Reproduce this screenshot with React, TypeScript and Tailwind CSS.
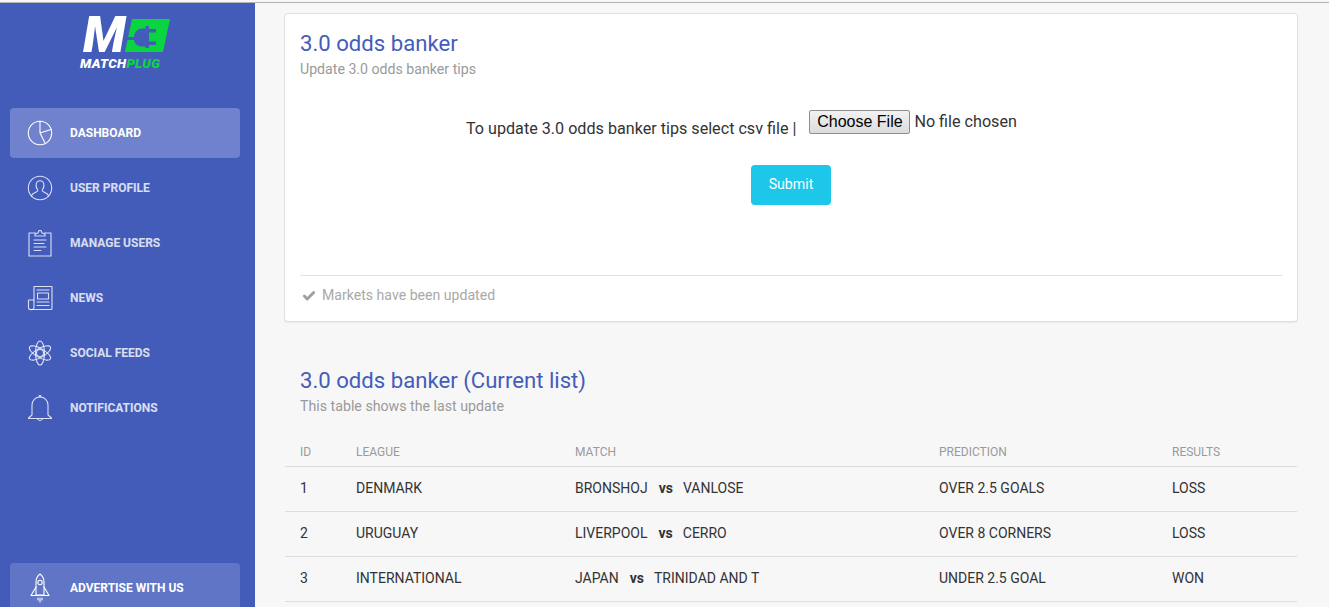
import React from "react";
import { Check } from "lucide-react";

const s = { fill: "none", stroke: "currentColor", strokeWidth: 1, strokeLinecap: "round" as const, strokeLinejoin: "round" as const };

const Pie = () => (
  <svg width="26" height="26" viewBox="0 0 26 26" {...s} strokeWidth={1.1}>
    <circle cx="13" cy="13" r="11.7" />
    <path d="M13 1.3V13l11-3.6M13 13l4.8 9.6" />
  </svg>
);
const UserIcon = () => (
  <svg width="26" height="26" viewBox="0 0 26 26" {...s} strokeWidth={1.1}>
    <circle cx="13" cy="13" r="11.7" />
    <path d="M4.5 21c.3-3 5.3-3.4 6.2-5.2.3-.7-.1-1.3-.6-2-1.7-2.200-1.600-8 2.900-8s4.600 5.800 2.900 8c-.5.700-.9 1.300-.6 2 .9 1.800 5.900 2.200 6.200 5.200" />
  </svg>
);
const Clip = () => (
  <svg width="26" height="28" viewBox="0 0 26 28" {...s} strokeWidth={1.1}>
    <path d="M8.500 4H2v23h22V4h-6.500" />
    <path d="M8 7V5l3-1 1-2.500h2L15 4l3 1v2z" />
    <path d="M7 11h12M7 14.500h10M7 18h12M7 21.500h7" />
  </svg>
);
const News = () => (
  <svg width="26" height="26" viewBox="0 0 26 26" {...s} strokeWidth={1.1}>
    <path d="M7 15V1.500h18v22a1 1 0 0 1-1 1H4" />
    <path d="M7 15H1.500v7.500a2 2 0 0 0 2 2 2.500 2.500 0 0 0 3.500-2V15z" />
    <path d="M10 5h12M10.500 8h11v6h-11zM10 17h12M10 20.500h12" />
  </svg>
);
const Atom = () => (
  <svg width="26" height="26" viewBox="0 0 26 26" {...s} strokeWidth={1.1}>
    <circle cx="13" cy="13" r="3.500" />
    <ellipse cx="13" cy="13" rx="4.500" ry="12" />
    <ellipse cx="13" cy="13" rx="4.500" ry="12" transform="rotate(60 13 13)" />
    <ellipse cx="13" cy="13" rx="4.500" ry="12" transform="rotate(120 13 13)" />
  </svg>
);
const Bell = () => (
  <svg width="26" height="28" viewBox="0 0 26 28" {...s} strokeWidth={1.1}>
    <path d="M5 21V11c0-4.500 3.500-8 8-8s8 3.500 8 8v10l3.500 3v.5h-23V24z" />
    <path d="M12 3l.500-1.500h1L14 3M10.500 24.500c.3 1.500 1 2 2.500 2s2.200-.5 2.500-2" />
  </svg>
);
const Rocket = () => (
  <svg width="20" height="30" viewBox="0 0 20 30" {...s} strokeWidth={1.1}>
    <path d="M6 22V9c0-3.500 2-6.500 4-8 2 1.500 4 4.500 4 8v13z" />
    <circle cx="10" cy="9.500" r="2.200" />
    <path d="M6 14l-5 8.500h18L14 14M8 25v2M10 25v4M12 25v2" />
  </svg>
);

const Logo = () => (
  <div className="flex flex-col items-start pl-[80px]">
    <div className="ml-[3px] flex h-[34px] items-center">
      <span className="mr-[-1px] text-[50px] font-black italic leading-[34px] text-white">M</span>
      <svg width="45" height="33" viewBox="0 0 45 33" className="block">
        <path d="M7 0H45L38 33H0Z" fill="#0bd441" />
        <path
          d="M1.500 18H9C9.500 13 12.500 9.500 17 9.500H20.500V7H24V10H31V13.500H24V22.500H31V26H24V29H20.500V27.500H17C12.500 27.500 9.500 25 9 21H0.800Z"
          fill="#435cba"
        />
      </svg>
    </div>
    <div className="mt-[5px] flex text-[13.3px] font-black italic leading-[14px] tracking-[0.3px]">
      <span className="text-white">MATCH</span>
      <span className="text-[#0bd441]">PLUG</span>
    </div>
  </div>
);

const navItems = [
  { label: "Dashboard", icon: <Pie />, active: true },
  { label: "User Profile", icon: <UserIcon /> },
  { label: "Manage Users", icon: <Clip /> },
  { label: "News", icon: <News /> },
  { label: "Social Feeds", icon: <Atom /> },
  { label: "Notifications", icon: <Bell /> },
];

const rows = [
  { id: 1, league: "DENMARK", home: "BRONSHOJ", away: "VANLOSE", prediction: "OVER 2.5 GOALS", result: "LOSS" },
  { id: 2, league: "URUGUAY", home: "LIVERPOOL", away: "CERRO", prediction: "OVER 8 CORNERS", result: "LOSS" },
  { id: 3, league: "INTERNATIONAL", home: "JAPAN", away: "TRINIDAD AND T", prediction: "UNDER 2.5 GOAL", result: "WON" },
];

const cols = "grid grid-cols-[56px_219px_364px_233px_1fr] px-[15px]";

export default function App() {
  return (
    <div className="h-[607px] overflow-hidden bg-[#f7f7f8] font-['Roboto',sans-serif]">
      <div className="mt-[2px] h-px bg-[#b4b4b4]" />
      <div className="flex h-[604px]">
        <aside className="flex h-[604px] w-[255px] shrink-0 flex-col overflow-hidden bg-[#435cba]">
          <div className="h-[105px] shrink-0 pt-[15px]">
            <Logo />
          </div>
          <nav className="flex flex-col gap-[5px]">
            {navItems.map((n) => (
              <div
                key={n.label}
                className={`ml-[10px] mr-[15px] flex h-[50px] items-center rounded-[4px] text-[12px] font-bold uppercase ${
                  n.active ? "bg-[#7082cd] text-white" : "text-white/80"
                }`}
              >
                <span className="flex w-[60px] justify-center">{n.icon}</span>
                <span>{n.label}</span>
              </div>
            ))}
          </nav>
          <div className="mb-[-6px] ml-[10px] mr-[15px] mt-auto flex h-[50px] shrink-0 items-center rounded-[4px] bg-[#6075c6] text-[12px] font-bold uppercase text-white">
            <span className="flex w-[60px] justify-center"><Rocket /></span>
            <span>Advertise with us</span>
          </div>
        </aside>

        <main className="min-w-0 flex-1 pl-[29px] pr-[31px] pt-[10px]">
          <section className="h-[309px] rounded-[4px] border border-[#e0e0e0] bg-white px-[15px] pt-[14px] shadow-[0_1px_1px_rgba(0,0,0,0.06)]">
            <h4 className="text-[22.15px] font-normal leading-[30px] text-[#435cba]">3.0 odds banker</h4>
            <p className="mt-px text-[14.15px] leading-[20px] text-[#9a9a9a]">Update 3.0 odds banker tips</p>
            <div className="mt-[31px] flex items-start pl-[166px] text-[16.15px] text-[#333333]">
              <span className="mt-[9px] leading-[20px]">To update 3.0 odds banker tips select csv file |</span>
              <button className="ml-[13px] h-[24px] w-[101px] rounded-[2px] border border-[#8e8e8e] bg-linear-to-b from-[#f2f2f2] to-[#dcdcdc] font-['Liberation_Sans',sans-serif] text-[16px] leading-[20px] text-black">
                Choose File
              </button>
              <span className="ml-[4px] leading-[23px]">No file chosen</span>
            </div>
            <div className="mt-[26px] flex justify-center">
              <button className="h-[40px] w-[80px] rounded-[4px] bg-[#1dc7ea] text-[14.2px] font-normal text-white">Submit</button>
            </div>
            <div className="mt-[70px] flex h-[41px] items-center border-t border-[#e3e3e3] pl-[2px] text-[14.1px] text-[#a9a9a9]">
              <Check size={14} strokeWidth={5} className="mr-[6px] text-[#a0a0a0]" />
              <span>Markets have been updated</span>
            </div>
          </section>

          <section className="mx-px mt-[43px]">
            <h4 className="pl-[15px] text-[22.15px] font-normal leading-[30px] text-[#435cba]">3.0 odds banker (Current list)</h4>
            <p className="mt-px pl-[15px] text-[14.2px] leading-[20px] text-[#9a9a9a]">This table shows the last update</p>
            <div className={`${cols} mt-[16px] h-[35px] items-center border-b border-[#dddddd] pt-[5px] text-[12px] uppercase text-[#9a9a9a]`}>
              <span>ID</span>
              <span>League</span>
              <span>Match</span>
              <span>Prediction</span>
              <span>Results</span>
            </div>
            {rows.map((r) => (
              <div key={r.id} className={`${cols} h-[45px] items-center border-b border-[#dddddd] pb-[2px] text-[14px] text-[#333333]`}>
                <span>{r.id}</span>
                <span>{r.league}</span>
                <span>
                  {r.home}
                  <b className="ml-[11px] mr-[10px] text-[14px] font-bold">vs</b>
                  {r.away}
                </span>
                <span>{r.prediction}</span>
                <span>{r.result}</span>
              </div>
            ))}
          </section>
        </main>
      </div>
    </div>
  );
}
